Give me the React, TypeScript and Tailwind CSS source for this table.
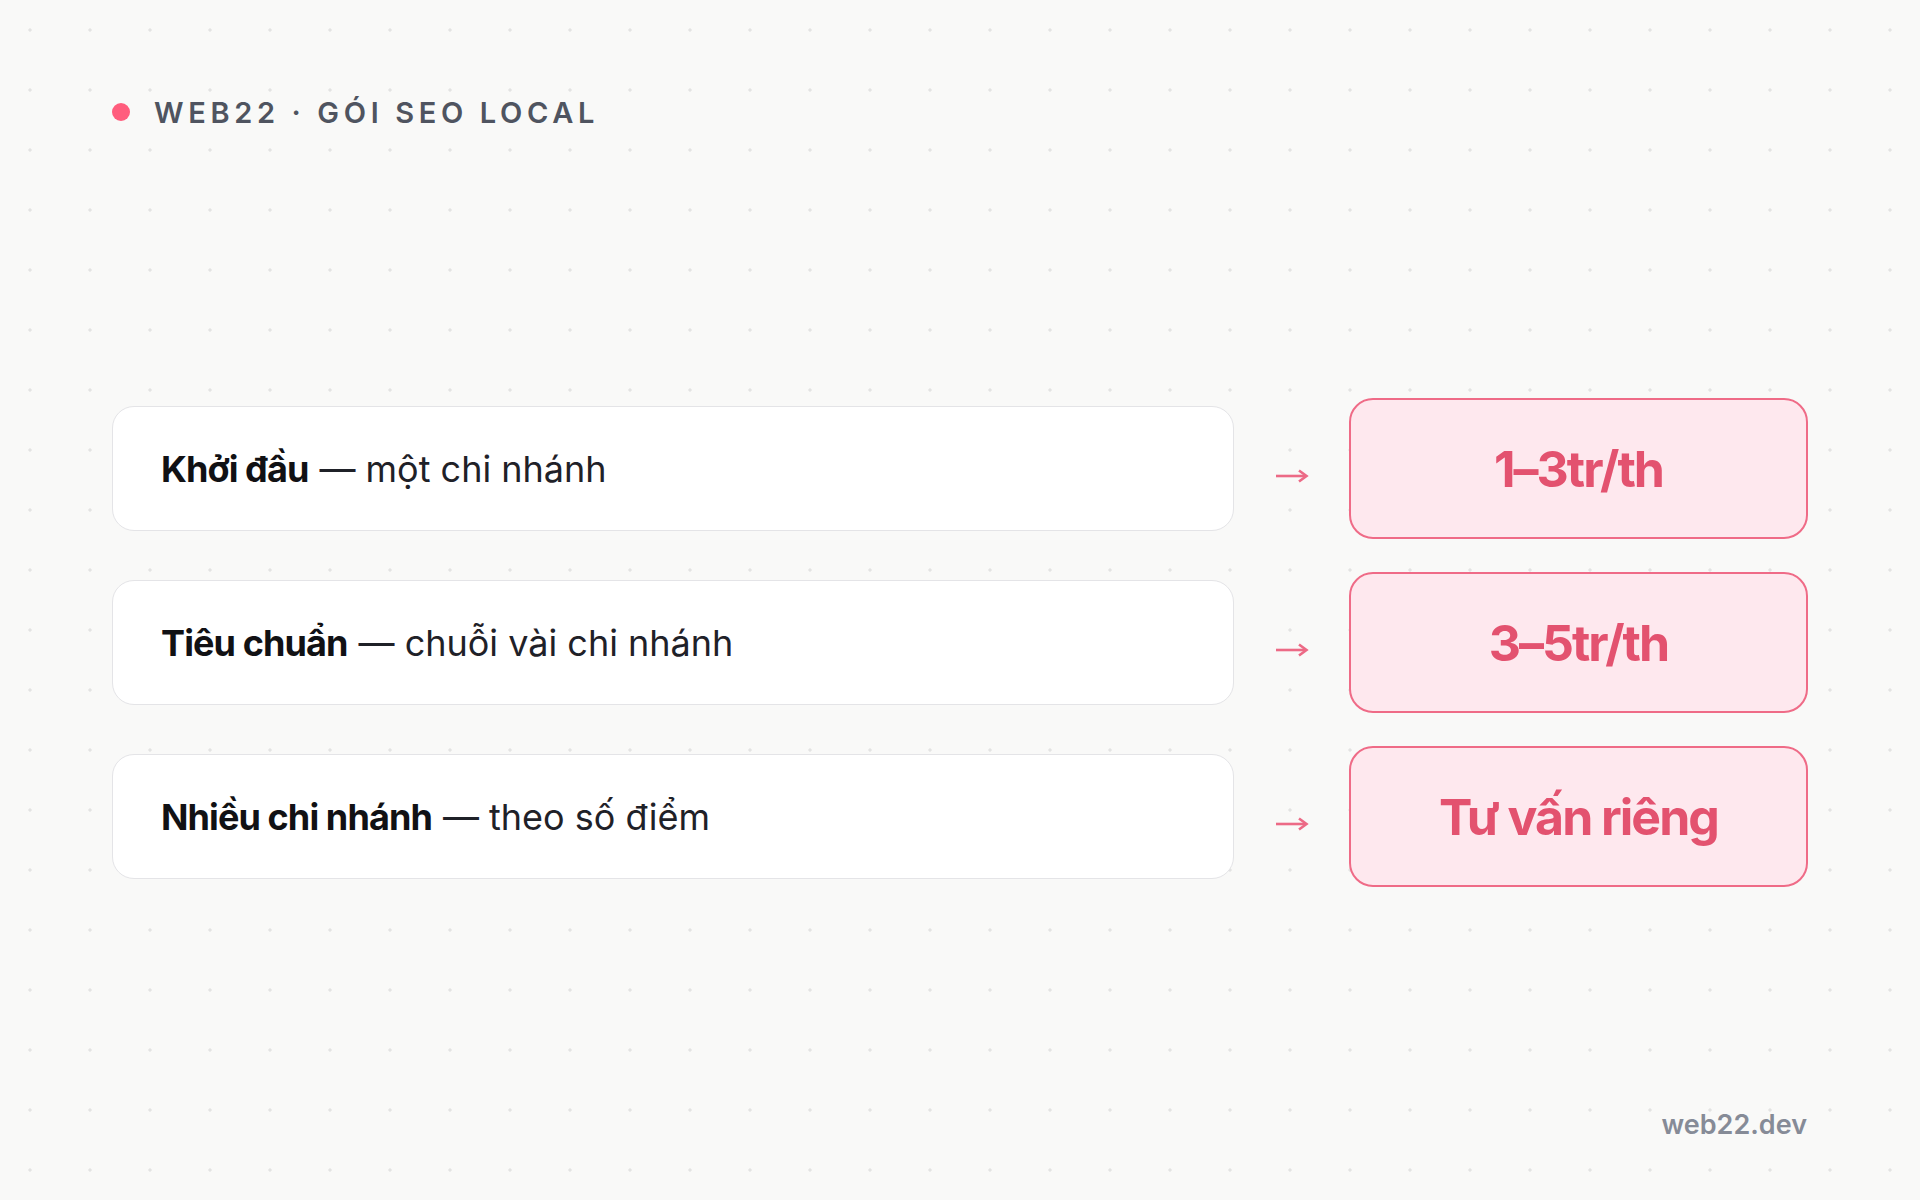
import React from "react";

const rows = [
  { bold: "Khởi đầu", rest: "một chi nhánh", price: "1–3tr/th" },
  { bold: "Tiêu chuẩn", rest: "chuỗi vài chi nhánh", price: "3–5tr/th" },
  { bold: "Nhiều chi nhánh", rest: "theo số điểm", price: "Tư vấn riêng" },
];

function Arrow() {
  return (
    <svg width="34" height="14" viewBox="0 0 34 14" className="mt-[14px]">
      <path d="M1 7 H31" stroke="#ec6a86" strokeWidth="2.6" fill="none" />
      <path d="M24 1.5 L31.5 7 L24 12.5" stroke="#ec6a86" strokeWidth="2.6" fill="none" strokeLinejoin="miter" />
    </svg>
  );
}

export default function App() {
  return (
    <div
      className="relative w-[1920px] h-[1200px] overflow-hidden bg-[#f9f9f8] bg-[radial-gradient(circle,#e3e3e3_1.5px,transparent_1.7px)] bg-[length:60px_60px] flex flex-col px-[112px]"
      style={{ fontFamily: "Inter, 'Noto Sans', sans-serif" }}
    >
      <div className="mt-[98px] flex items-center gap-[24px] h-[28px]">
        <div className="w-[18px] h-[18px] rounded-full bg-[#ff5d7d]" />
        <div className="text-[29px] font-semibold tracking-[0.16em] text-[#4f5460] leading-none">
          WEB22 · GÓI SEO LOCAL
        </div>
      </div>

      <div className="mt-[272px] flex flex-col gap-[33px]">
        {rows.map((r) => (
          <div key={r.price} className="grid grid-cols-[1fr_115px_459px] items-center h-[141px]">
            <div className="h-[125px] bg-white border border-[#e4e4e7] rounded-[22px] flex items-center pl-[48px] text-[36px] text-[#1f2128] leading-none">
              <span className="font-bold tracking-[-0.025em] text-[#111114]">{r.bold}</span>
              <span className="ml-[11px]">— {r.rest}</span>
            </div>
            <div className="flex justify-center">
              <Arrow />
            </div>
            <div className="h-[141px] rounded-[24px] border-2 border-[#ef6b87] bg-[#fee8ee] flex items-center justify-center text-[50px] font-bold tracking-[-0.04em] text-[#e3526f] leading-none">
              {r.price}
            </div>
          </div>
        ))}
      </div>

      <div className="absolute right-[113px] bottom-[62px] text-[27px] font-semibold text-[#868b97] leading-none">
        web22.dev
      </div>
    </div>
  );
}
